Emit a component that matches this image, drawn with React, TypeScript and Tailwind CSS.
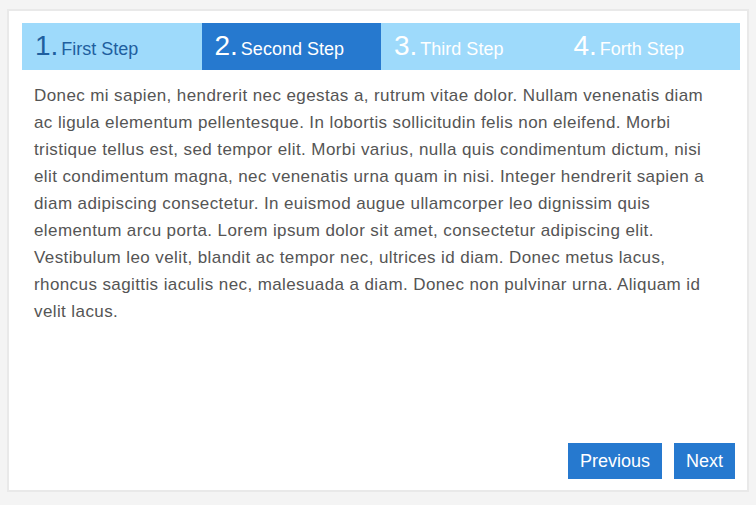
import React from "react";

const steps = [
  { n: "1", label: "First Step", state: "done" },
  { n: "2", label: "Second Step", state: "active" },
  { n: "3", label: "Third Step", state: "todo" },
  { n: "4", label: "Forth Step", state: "todo" },
];

export default function App() {
  return (
    <div
      className="w-[756px] h-[505px] bg-[#f4f4f4] pt-[9px] pl-[7px]"
      style={{ fontFamily: '"Liberation Sans", Arial, sans-serif' }}
    >
      <div className="w-[742px] h-[483px] bg-white border-2 border-[#e9e9e9] pt-[12px] pl-[13px] pr-[7px] pb-[11px] flex flex-col">
        <div className="flex h-[47px] w-[718px]">
          {steps.map((s) => (
            <div
              key={s.n}
              className={
                "flex-1 flex items-baseline pl-[13px] pt-[9px] " +
                (s.state === "active"
                  ? "bg-[#2679cf] text-white"
                  : s.state === "done"
                  ? "bg-[#9edafb] text-[#1f5f9f]"
                  : "bg-[#9edafb] text-white")
              }
            >
              <span className="text-[28px] leading-[28px]">{s.n}.</span>
              <span className="text-[18px] leading-[18px] ml-[3px]">{s.label}</span>
            </div>
          ))}
        </div>
        <div className="flex-1 pl-[12px] pr-[20px] pt-[12px] text-[17px] leading-[27px] tracking-[0.4px] text-[#555555]">
          <p>
            Donec mi sapien, hendrerit nec egestas a, rutrum vitae dolor. Nullam venenatis diam ac ligula elementum pellentesque. In lobortis sollicitudin felis non eleifend. Morbi tristique tellus est, sed tempor elit. Morbi varius, nulla quis condimentum dictum, nisi elit condimentum magna, nec venenatis urna quam in nisi. Integer hendrerit sapien a diam adipiscing consectetur. In euismod augue ullamcorper leo dignissim quis elementum arcu porta. Lorem ipsum dolor sit amet, consectetur adipiscing elit. Vestibulum leo velit, blandit ac tempor nec, ultrices id diam. Donec metus lacus, rhoncus sagittis iaculis nec, malesuada a diam. Donec non pulvinar urna. Aliquam id velit lacus.
          </p>
        </div>
        <div className="flex justify-end gap-[12px] pr-[5px]">
          <button className="h-[36px] w-[94px] bg-[#2679cf] text-white text-[18px]">Previous</button>
          <button className="h-[36px] w-[61px] bg-[#2679cf] text-white text-[18px]">Next</button>
        </div>
      </div>
    </div>
  );
}
